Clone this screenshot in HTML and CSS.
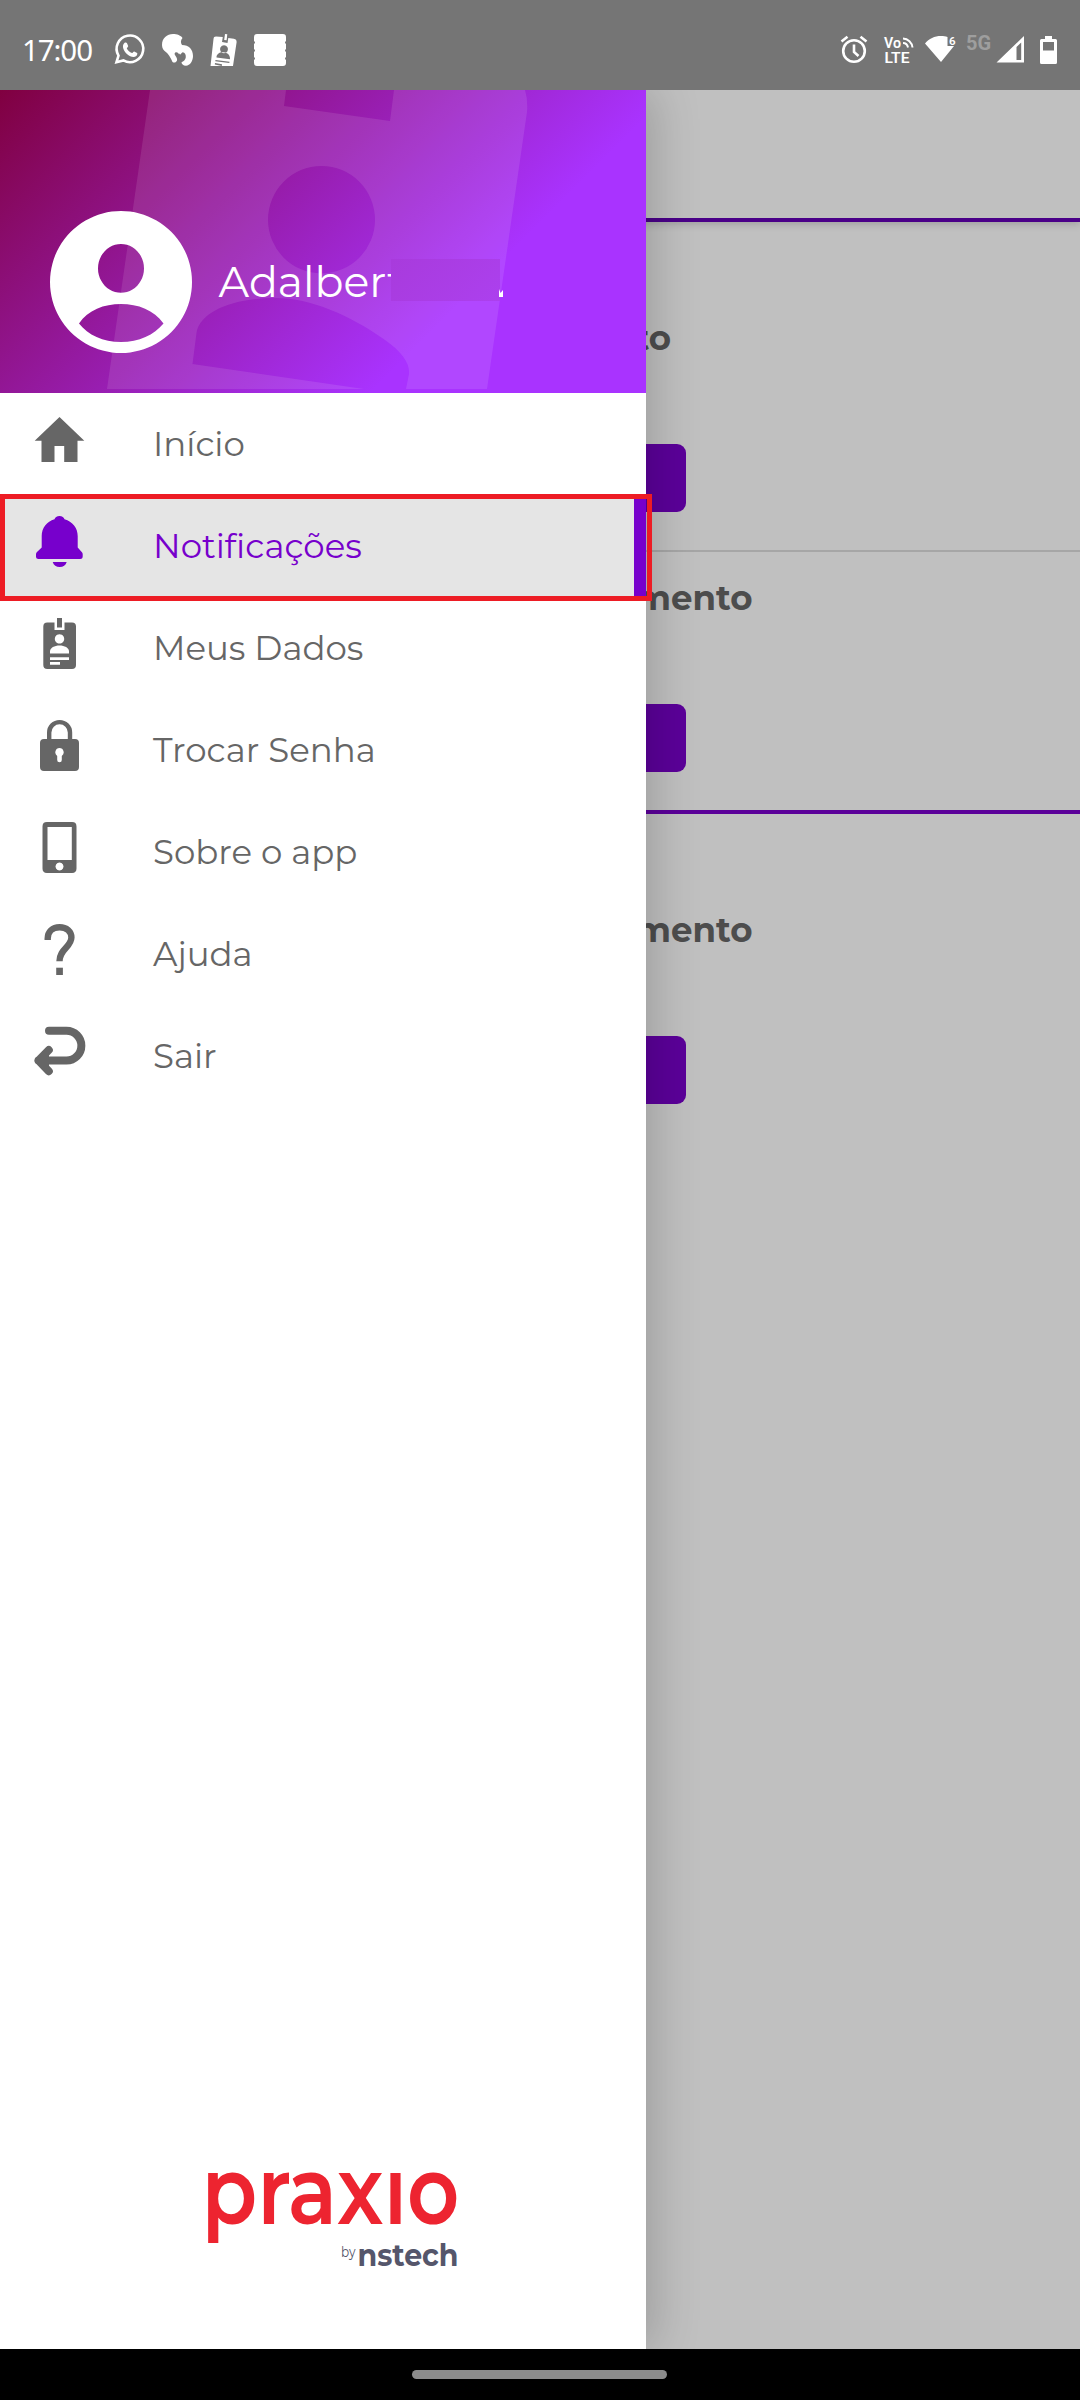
FILE: index.html
```html
<!DOCTYPE html>
<html lang="pt-BR">
<head>
<meta charset="utf-8">
<title>Praxio</title>
<link rel="stylesheet" href="styles.css">
</head>
<body>
<header class="status">
  <span class="clock">17:00</span>
  <div class="status-left">
    <svg width="32" height="32" viewBox="114 35 32 32"><path d="M116.500 63.200l2-6.600a13.300 13.300 0 1 1 4.900 4.800z" fill="none" stroke="#fff" stroke-width="2.600"/><path d="M124.600 43.800c1-.6 2-.5 2.400.4l1.200 2.900c.2.6-1.400 2-1.400 2.300 1.200 2.300 2.800 3.700 5.200 4.700.4.100 1.600-1.900 2.200-1.700l2.900 1.500c.5.3.2 2.200-.8 3.100-2.500 2-6.300.6-9.400-2-3.400-3.200-5.600-8.300-2.300-11.200z" fill="#fff"/></svg>
    <svg width="32" height="32" viewBox="161 34 32 32"><path d="M161 45c0-7 5-11 11-11 4 0 8 1.500 9.500 4-2 2.500-2 4.500-.5 7 7 0 11 4.500 11 11 0 5-3 9.500-7 9.800-3-.3-4.500-2-4.500-3.600 2-.6 4-2.500 4.300-5 .2-3-1-4.700-3-5-1.500 0-3 1-3.800 2-.7-1.700-2.500-2.400-3.700-1.700-2.500 2 2.800 4.700 1.700 8-.7 2-3 2.700-4.500 1.400-2.400-5-3.700-7.500-6.400-9.600-2.500-2-4.100-4-4.100-7.300z" fill="#fff"/><path d="M178 51.500l3.500.7-2.500 2.500z" fill="#fff"/></svg>
    <svg width="28" height="32" viewBox="210 34 28 32"><path fill-rule="evenodd" fill="#fff" d="M216 36.500l6.800.6-.8 5 5.500 1 .8-5 5.500.6c2 .3 3 1.500 2.800 3.500L233 66H210.500l3-27c.2-1.800 1-2.500 2.500-2.500zM224 45.300a4 4 0 1 0 .01 0zM216.500 57.500l13.500 1.700c.3-4-2.500-6.600-6.500-6.900-4-.3-7 1.700-7 5.200zM215.500 60l-.2 1.200 14 1.800.2-1.300zM215 63l-.2 1.500 7 1.500.2-1.800z"/><path d="M225 34l2.300.3-.7 6-2.400-.3z" fill="#fff"/></svg>
    <svg width="32" height="32" viewBox="254 34 32 32"><path fill="#fff" d="M257 34h26q3 0 3 3v4q-2 1.500 0 3v5q-2 1.500 0 3v5q-2 1.500 0 3v3q0 3-3 3h-26q-3 0-3-3v-3q2-1.500 0-3v-5q2-1.500 0-3v-5q2-1.500 0-3v-4q0-3 3-3z"/></svg>
  </div>
  <div class="status-right">
    <svg width="28" height="30" viewBox="840 35 28 30"><circle cx="854" cy="51" r="10.800" fill="none" stroke="#fff" stroke-width="2.600"/><path d="M841.500 41.500l6-4.800M866.500 41.500l-6-4.800M854 44.500v7.500l4.500 4" fill="none" stroke="#fff" stroke-width="2.600"/></svg>
    <svg class="volte" width="31" height="30" viewBox="883 35 31 30"><text x="884" y="47.500" font-size="14" textLength="17" lengthAdjust="spacingAndGlyphs">Vo</text><text x="884.500" y="62.500" font-size="15" textLength="25" lengthAdjust="spacingAndGlyphs">LTE</text><path d="M903 38.500c5 .2 9 4 9.500 9M903 43c3 0 4.500 2 5 4.500" fill="none" stroke="#fff" stroke-width="2"/></svg>
    <svg class="wifi" width="32" height="30" viewBox="925 35 32 30"><path fill="#fff" d="M925 43.500c4-5 9.500-7.500 16-7.500 2.500 0 4.500.3 6.500 1v9h6.500L941 62z"/><text x="949" y="44.500" font-size="11.500">6</text></svg>
    <span class="net">5G</span>
    <svg width="28" height="28" viewBox="996 36 28 28"><path fill="#fff" fill-rule="evenodd" d="M996.500 62.500L1024 36v26.500zM1016.500 47v13h4.700V42.500z"/></svg>
    <svg width="18" height="30" viewBox="1040 35 18 30"><path fill="#fff" fill-rule="evenodd" d="M1045 36h7v3h3.500q1.500 0 1.500 1.500v22q0 1.500-1.500 1.500h-14q-1.500 0-1.500-1.500v-22q0-1.500 1.500-1.500h3.500zM1043 42v8.500h11V42z"/></svg>
  </div>
</header>

<main class="screen">
  <section class="page">
    <div class="toolbar"></div>
    <div class="group">
      <article class="item ruled"><h2 class="item-title">mento</h2><div class="item-button"></div></article>
      <article class="item item-long"><h2 class="item-title">mento</h2><div class="item-button"></div></article>
    </div>
    <div class="group">
      <article class="item item-long"><h2 class="item-title">mento</h2><div class="item-button"></div></article>
    </div>
  </section>

  <aside class="drawer">
    <div class="profile">
      <svg class="profile-art" width="646" height="303" viewBox="0 90 646 303"><path fill="#fff" fill-opacity=".1" fill-rule="evenodd" d="M150 90H286L284 106 390 121 394 90H525Q528 100 527 112L487 389H107zM268 219.700a53.500 53.700 0 1 0 107 0a53.500 53.700 0 1 0-107 0zM192.500 364L196.500 333C200 311 234 298 276 298C310 298 350 315 385 340C402 352 410 363 409 374L406 389H364z"/></svg>
      <svg class="avatar" width="142" height="142" viewBox="0 0 142 142"><path fill="#fff" fill-rule="evenodd" d="M71 0a71 71 0 1 0 .01 0zM71 33a23 24.400 0 1 1-.01 0zM29 112.500C38 99 54 93 71 93s33 6 42.500 19.500C104 124 89 131 71 131s-33-7-42-18.500z"/></svg>
      <div class="name">Adalbert</div>
      <i class="name-mask"></i>
      <svg class="name-rest" width="4" height="8" viewBox="0 0 4 8"><path fill="#fff" d="M0 0l1.500 4L4 1v7H0z"/></svg>
    </div>
    <nav class="menu">
      <a class="entry"><svg class="icon" viewBox="0 0 51 51"><path d="M25.500 3L50.300 26.800H43.500V48H30.200V32H20.500V48H7.500V26.800H.7z"/></svg><span>Início</span></a>
      <a class="entry active"><svg class="icon" viewBox="0 0 51 51"><path d="M25.500 0c2.700 0 4.500 1.400 5 3.200C38.500 5.500 43.700 12 43.700 20v11.500l4 4.500c.7.700 1 1.400 1 2.200V40.500c0 1.700-1 2.500-2.500 2.500H4.500C3 43 2 42.200 2 40.500V38.200c0-.8.300-1.500 1-2.200l4.700-4.500V20c0-8 5-14.500 12.800-16.800C21 1.400 22.800 0 25.500 0zM18.700 46h14c-1 3.300-3.500 5-7 5s-6-1.700-7-5z"/></svg><span>Notificações</span></a>
      <a class="entry"><svg class="icon" viewBox="0 0 51 51"><path fill-rule="evenodd" d="M13.300 4.600h7.200V12h10V4.600H38q4 0 4 4V47q0 4-4 4H13.300q-4 0-4-4V8.600q0-4 4-4zM25.500 16.200a4.700 4.700 0 1 0 .01 0zM16 35.400h19v-2c0-3.500-4.500-5.800-9.500-5.800S16 29.900 16 33.400zM16 39.300V42H35V39.300zM16 44V46.700H26V44zM23 0h5v9.500h-5z"/></svg><span>Meus Dados</span></a>
      <a class="entry"><svg class="icon" viewBox="0 0 51 51"><path fill="none" stroke="currentColor" stroke-width="4.400" d="M15.200 20V12.500a10.400 10.400 0 0 1 20.800 0V20"/><path fill-rule="evenodd" d="M10 19H41q4 0 4 4V47q0 4-4 4H10q-4 0-4-4V23q0-4 4-4zM25.500 28a4.400 4.400 0 0 0-2.300 8V40q0 2.300 2.300 2.300T27.800 40V36a4.400 4.400 0 0 0-2.300-8z"/></svg><span>Trocar Senha</span></a>
      <a class="entry"><svg class="icon" viewBox="0 0 51 51"><path fill-rule="evenodd" d="M12.900 0H38.100q4.400 0 4.400 4.400V46.600q0 4.400-4.400 4.400H12.900q-4.400 0-4.400-4.400V4.400Q8.500 0 12.900 0zM13.500 4.900V38H37.800V4.900zM25.500 40.600a4 4 0 1 0 .01 0z"/></svg><span>Sobre o app</span></a>
      <a class="entry"><svg class="icon" viewBox="0 0 51 51"><path fill="none" stroke="currentColor" stroke-width="6.400" d="M13.700 16V14.500C13.700 7.500 18.500 3.200 25.600 3.200S37.400 7.500 37.400 13.500C37.400 23 25.500 25 25.500 37.200"/><path d="M22.200 43.700h6.700V51h-6.700z"/></svg><span>Ajuda</span></a>
      <a class="entry"><svg class="icon" viewBox="0 0 51 51"><path fill="none" stroke="currentColor" stroke-width="8" stroke-linecap="round" stroke-linejoin="round" d="M15 4.800H32.500a14.500 14.500 0 0 1 0 29.700H4.500M14.800 24L4.500 34.500 14.800 45.200"/><path d="M4.500 34.500L15 24v21z"/></svg><span>Sair</span></a>
    </nav>
    <div class="brand">
      <svg width="260" height="110" viewBox="200 2168 260 110" role="img" aria-label="praxio by nstech"><text class="brand-main" x="201.500" y="2224" textLength="258" lengthAdjust="spacingAndGlyphs">praxıo</text><text class="brand-by" x="341" y="2257" textLength="14.500" lengthAdjust="spacingAndGlyphs">by</text><text class="brand-sub" x="357.500" y="2265.700" textLength="101" lengthAdjust="spacingAndGlyphs">nstech</text></svg>
    </div>
  </aside>
  <div class="highlight"></div>
</main>
<footer class="navbar"><div class="pill"></div></footer>
</body>
</html>
```
FILE: styles.css
```css
* { box-sizing: border-box; }
body {
  margin: 0;
  width: 1080px;
  height: 2400px;
  display: flex;
  flex-direction: column;
  overflow: hidden;
  background: #c0c0c0;
  font-family: Montserrat, Inter, "Open Sans", sans-serif;
}
svg { display: block; flex: none; overflow: visible; }

/* status bar */
.status {
  height: 90px;
  flex: none;
  display: flex;
  align-items: center;
  padding: 10px 22px 0 22px;
  background: #757575;
  color: #fff;
}
.clock {
  width: 92px;
  font: 400 29.500px/40px "Noto Sans", sans-serif;
  letter-spacing: -1.100px;
}
.status-left { display: flex; align-items: center; gap: 16px; }
.status-right { display: flex; align-items: center; margin-left: auto; }
.status-right svg { margin-left: 15px; }
.status-right .wifi { margin-left: 11px; }
.status-right svg:nth-last-child(2) { margin-left: 4px; }
.status-right svg:last-child { margin-left: 16px; }
.volte text, .wifi text { fill: #fff; font-family: Roboto, sans-serif; font-weight: 600; }
.net {
  margin-left: 9px;
  width: 26px;
  height: 34px;
  font: 700 20px/20px Roboto, sans-serif;
  color: #9e9e9e;
}

/* page behind the drawer */
.screen { position: relative; flex: 1; overflow: hidden; }
.toolbar {
  height: 132px;
  border-bottom: 4px solid #4a0088;
  box-shadow: 0 2px 8px rgba(0, 0, 0, .18);
}
.group { padding-top: 70px; border-bottom: 4px solid #5b0099; }
.group:last-child { border: 0; }
.item { height: 258px; display: flex; flex-direction: column; }
.ruled { height: 260px; border-bottom: 2px solid #a6a6a6; }
.item-title {
  height: 152px;
  width: 671px;
  margin: 0;
  padding-top: 25px;
  font-size: 34px;
  line-height: 42px;
  font-weight: 700;
  text-align: right;
  color: #4d4d4d;
}
.item-long .item-title { width: 752.500px; }
.item-button { width: 686px; height: 68px; border-radius: 0 9px 9px 0; background: #5b0099; }

/* drawer */
.drawer {
  position: absolute;
  top: 0;
  left: 0;
  width: 646px;
  height: 100%;
  display: flex;
  flex-direction: column;
  background: #fff;
  box-shadow: 8px 0 44px rgba(0, 0, 0, .19);
}
.profile {
  position: relative;
  height: 303px;
  display: flex;
  align-items: flex-start;
  padding: 121px 0 0 50px;
  background: linear-gradient(135deg, #800040 0%, #a933ff 71%);
}
.profile-art { position: absolute; left: 0; top: 0; }
.avatar { position: relative; }
.name {
  position: relative;
  margin: 46px 0 0 26.500px;
  font-size: 42.700px;
  line-height: 50px;
  font-weight: 400;
  color: #fff;
  white-space: nowrap;
}
/* hides the end of the name, leaving the stroke of its last letter */
.name-mask {
  position: absolute;
  left: 391px;
  top: 169px;
  width: 109px;
  height: 42px;
  background: linear-gradient(135deg, #a83bdc, #ac40ee);
}
.name-rest { position: absolute; left: 499px; top: 199px; }
.entry {
  height: 102px;
  display: flex;
  align-items: flex-start;
  padding: 21px 0 0 34px;
  font-size: 34px;
  line-height: 60px;
  font-weight: 400;
  color: #666;
}
.entry span { margin-left: 68px; white-space: nowrap; }
.active { background: #e5e5e5; color: #70c; border-right: 12px solid #70c; }
.icon { width: 51px; height: 51px; fill: currentColor; }
.brand { margin-top: auto; padding: 0 0 71px 200px; }
.brand-main { font: 600 96px Montserrat, sans-serif; fill: #ed2430; }
.brand-by { font: 400 14px Montserrat, sans-serif; fill: #55566b; }
.brand-sub { font: 700 31px Montserrat, sans-serif; fill: #55566b; }

/* frame around the selected entry */
.highlight {
  position: absolute;
  left: 0;
  top: 404px;
  width: 652px;
  height: 107px;
  border: 5px solid #ed1c24;
}

.navbar {
  height: 51px;
  flex: none;
  display: flex;
  align-items: center;
  justify-content: center;
  padding-right: 1px;
  background: #000;
}
.pill { width: 255px; height: 9px; border-radius: 5px; background: #8c8c8c; }
```
